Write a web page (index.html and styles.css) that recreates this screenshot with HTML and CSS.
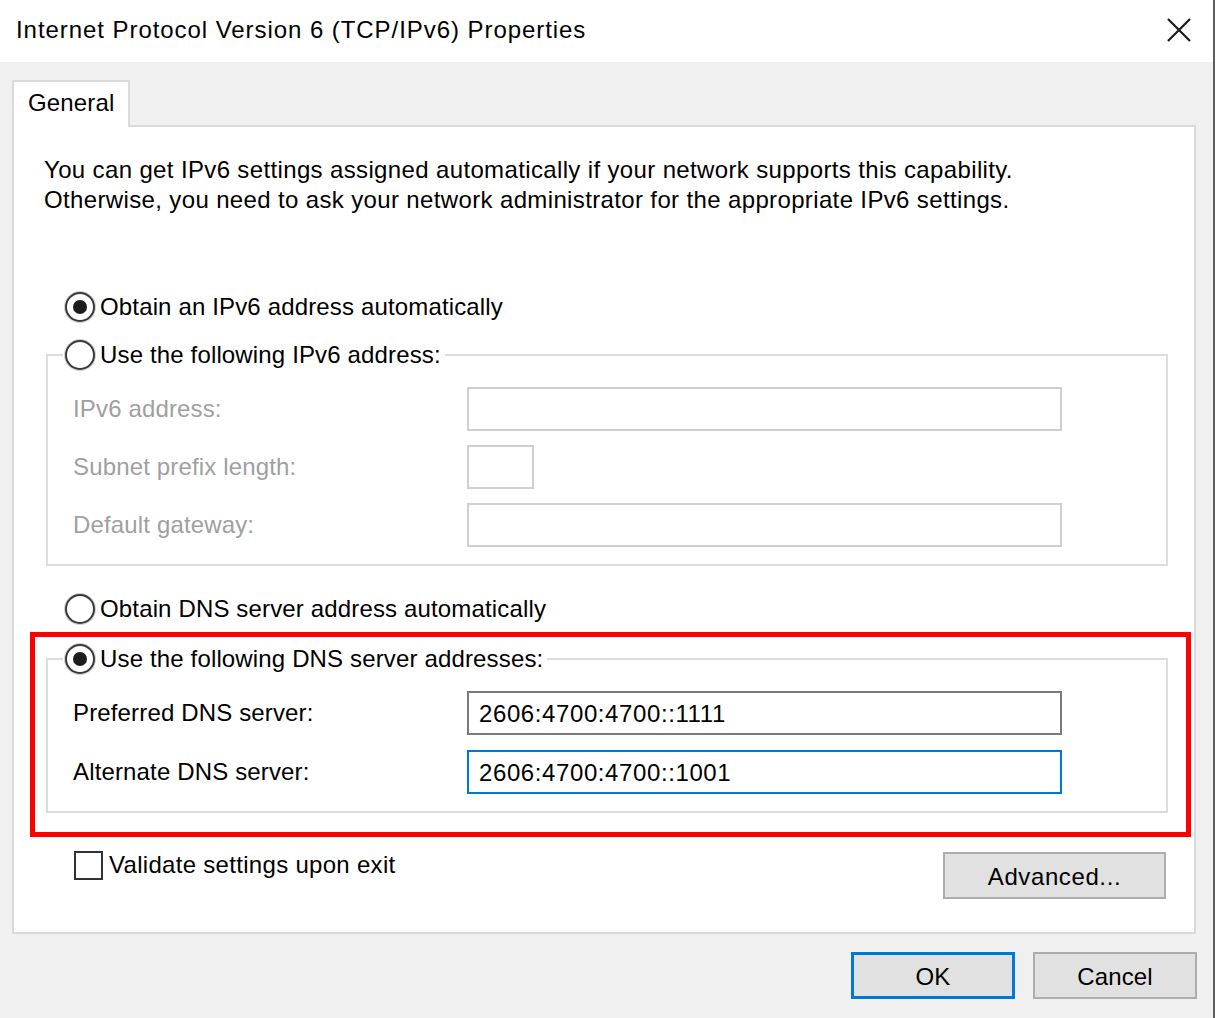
FILE: index.html
```html
<!DOCTYPE html>
<html lang="en">
<head>
<meta charset="utf-8">
<title>Internet Protocol Version 6 (TCP/IPv6) Properties</title>
<link rel="stylesheet" href="styles.css">
</head>
<body>
<div class="window">
  <div class="titlebar">
    <span class="title">Internet Protocol Version 6 (TCP/IPv6) Properties</span>
    <span class="close">
      <svg width="26" height="26" viewBox="0 0 26 26"><path d="M2 2 L24 24 M24 2 L2 24" stroke="#1a1a1a" stroke-width="2.2" fill="none"/></svg>
    </span>
  </div>
  <div class="client">
    <div class="tabs"><div class="tab">General</div></div>
    <div class="panel">
      <p class="desc">You can get IPv6 settings assigned automatically if your network supports this capability.<br>Otherwise, you need to ask your network administrator for the appropriate IPv6 settings.</p>

      <div class="opt first"><span class="radio checked"></span><span>Obtain an IPv6 address automatically</span></div>

      <fieldset class="group">
        <legend><span class="radio"></span><span>Use the following IPv6 address:</span></legend>
        <div class="grid">
          <span class="label disabled">IPv6 address:</span><span class="field disabled-field"></span>
          <span class="label disabled">Subnet prefix length:</span><span class="field disabled-field short"></span>
          <span class="label disabled">Default gateway:</span><span class="field disabled-field"></span>
        </div>
      </fieldset>

      <div class="opt dnsauto"><span class="radio"></span><span>Obtain DNS server address automatically</span></div>

      <div class="highlight">
        <fieldset class="group dns">
          <legend><span class="radio checked"></span><span>Use the following DNS server addresses:</span></legend>
          <div class="grid">
            <span class="label">Preferred DNS server:</span><span class="field">2606:4700:4700::1111</span>
            <span class="label">Alternate DNS server:</span><span class="field focus">2606:4700:4700::1001</span>
          </div>
        </fieldset>
      </div>

      <div class="bottom">
        <div class="check"><span class="box"></span><span>Validate settings upon exit</span></div>
        <div class="btn advanced">Advanced...</div>
      </div>
    </div>
    <div class="footer">
      <div class="btn ok">OK</div>
      <div class="btn">Cancel</div>
    </div>
  </div>
</div>
</body>
</html>
```
FILE: styles.css
```css
html, body {
  margin: 0;
  padding: 0;
  background: #ffffff;
}
body {
  font-family: "Liberation Sans", Arial, sans-serif;
  font-size: 24px;
  letter-spacing: 0.15px;
  color: #000;
}
.window {
  width: 1213px;
  height: 1018px;
  border-right: 2px solid #5e5e5e;
  display: flex;
  flex-direction: column;
  background: #f0f0f0;
}
.titlebar {
  height: 62px;
  background: #ffffff;
  display: flex;
  align-items: center;
  justify-content: space-between;
  padding: 0 21px 3px 16px;
  box-sizing: border-box;
}
.title {
  color: #000;
  font-size: 24px;
  letter-spacing: 0.94px;
  line-height: 30px;
}
.close {
  display: flex;
  width: 26px;
  height: 26px;
}
.client {
  flex: 1;
  padding: 18px 0 0 12px;
  box-sizing: border-box;
}
.tabs {
  display: flex;
  position: relative;
  z-index: 1;
  margin-bottom: -2px;
}
.tab {
  width: 118px;
  height: 47px;
  box-sizing: border-box;
  background: #fff;
  border: 2px solid #dadada;
  border-bottom: none;
  padding-left: 14px;
  line-height: 42px;
}
.panel {
  width: 1184px;
  box-sizing: border-box;
  background: #ffffff;
  border: 2px solid #dadada;
  padding: 28px 26px 33px 32px;
}
.desc {
  margin: 0 0 0 -2px;
  line-height: 30px;
  letter-spacing: 0.36px;
}
.opt {
  display: flex;
  align-items: center;
  height: 30px;
  padding-left: 19px;
  gap: 5px;
  line-height: 32px;
}
.opt.first { margin-top: 77px; }
.opt.dnsauto { margin-top: 28px; }
.radio {
  width: 30px;
  height: 30px;
  box-sizing: border-box;
  border: 2px solid #3a3a3a;
  border-radius: 50%;
  background: #fff;
  display: flex;
  align-items: center;
  justify-content: center;
  flex: none;
  box-shadow: 0 0 0 1px #d0d0d0;
}
.radio.checked::after {
  content: "";
  width: 14px;
  height: 14px;
  border-radius: 50%;
  background: #1c1c1c;
}
.group {
  margin: 18px 0 0 0;
  border: 2px solid #dcdcdc;
  padding: 17px 0 17px 25px;
  min-inline-size: 0;
}
.group legend {
  display: flex;
  align-items: center;
  gap: 5px;
  height: 30px;
  padding: 0 4px 0 2px;
  margin-left: -10px;
  line-height: 32px;
}
.grid {
  display: grid;
  grid-template-columns: 394px 595px;
  row-gap: 14px;
  align-items: center;
}
.dns .grid { row-gap: 15px; }
.label { line-height: 32px; }
.label.disabled { color: #a0a0a0; }
.field {
  height: 44px;
  box-sizing: border-box;
  border: 2px solid #7a7a7a;
  background: #fff;
  padding-left: 10px;
  line-height: 42px;
  letter-spacing: 0.6px;
}
.field.disabled-field { border-color: #cfcfcf; }
.field.short { width: 67px; }
.field.focus { border-color: #0078d7; }
.highlight {
  margin: 8px -23px 0 -16px;
  border: 5px solid #ff0000;
  padding: 7px 18px 19px 11px;
}
.highlight .group { margin-top: 0; }
.bottom {
  margin-top: 15px;
  display: flex;
  justify-content: space-between;
  align-items: flex-start;
  padding-right: 2px;
}
.check {
  display: flex;
  align-items: center;
  gap: 6px;
  padding-left: 28px;
  margin-top: -2px;
  height: 30px;
  letter-spacing: 0.3px;
  line-height: 32px;
}
.box {
  width: 29px;
  height: 29px;
  box-sizing: border-box;
  border: 2px solid #333;
  background: #fff;
}
.btn {
  width: 164px;
  height: 47px;
  box-sizing: border-box;
  background: #e1e1e1;
  border: 2px solid #adadad;
  display: flex;
  align-items: center;
  justify-content: center;
  padding-top: 3px;
}
.btn.advanced { width: 223px; letter-spacing: 0.6px; }
.btn.ok { border: 3px solid #0078d7; }
.footer {
  display: flex;
  justify-content: flex-end;
  gap: 18px;
  margin-top: 18px;
  padding-right: 16px;
}
```
